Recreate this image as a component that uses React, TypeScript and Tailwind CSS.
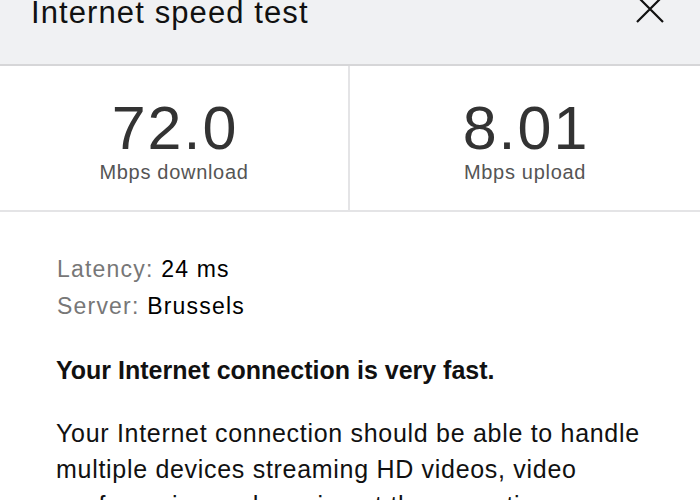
export default function App() {
  return (
    <div className="w-[700px] h-[500px] overflow-hidden bg-white font-['Liberation_Sans',Arial,sans-serif] text-black">
      {/* ヘッダー */}
      <header className="h-[66px] bg-[#f0f1f3] border-b-2 border-[#d6d6d8] flex items-start justify-between pl-[31px] pr-[35px]">
        <h1 className="text-[31px] leading-none -mt-[3px] text-[#111] tracking-[1.1px]">Internet speed test</h1>
        <svg width="30" height="30" viewBox="0 0 30 30" className="-mt-[6px]">
          <path d="M2 2 L28 28 M28 2 L2 28" stroke="#111" strokeWidth="2.2" fill="none" />
        </svg>
      </header>

      {/* 速度 */}
      <section className="grid grid-cols-2 h-[146px] border-b-2 border-[#e4e4e6]">
        <div className="flex flex-col items-center pt-[32px] border-r-2 border-[#e4e4e6]">
          <div className="text-[61px] leading-none text-[#333] tracking-[2px] pl-[2px]">72.0</div>
          <div className="text-[20px] leading-none text-[#555] mt-[3px] tracking-[0.7px]">Mbps download</div>
        </div>
        <div className="flex flex-col items-center pt-[32px]">
          <div className="text-[61px] leading-none text-[#333] tracking-[2px] pl-[2px]">8.01</div>
          <div className="text-[20px] leading-none text-[#555] mt-[3px] tracking-[0.7px]">Mbps upload</div>
        </div>
      </section>

      {/* 詳細 */}
      <section className="pl-[56px] pt-[39px]">
        <p className="text-[23px] leading-[37px] tracking-[1.2px] pl-[1px]">
          <span className="text-[#777]">Latency: </span>24 ms
        </p>
        <p className="text-[23px] leading-[37px] tracking-[1.2px] pl-[1px]">
          <span className="text-[#777]">Server: </span>Brussels
        </p>
        <p className="text-[25px] leading-[36px] font-bold mt-[27px] text-[#111]">Your Internet connection is very fast.</p>
        <p className="w-[592px] text-[25px] leading-[36px] mt-[27px] tracking-[0.7px] text-[#111]">
          Your Internet connection should be able to handle multiple devices streaming HD videos, video conferencing and gaming at the same time.
        </p>
      </section>
    </div>
  );
}
